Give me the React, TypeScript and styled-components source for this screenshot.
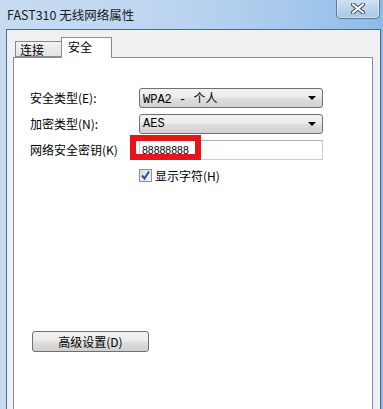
import React from "react";
import styled, { createGlobalStyle } from "styled-components";

const GlobalStyle = createGlobalStyle`
    html, body {
        margin: 0;
        padding: 0;
        background: #ffffff;
    }
    body {
        font-family: "Noto Sans CJK SC", "Liberation Sans", sans-serif;
        font-size: 12px;
    }
`;

const App = () => {
    return (
        <>
            <GlobalStyle />
            <Window>
                <TitleBar>
                    <Title>FAST310 无线网络属性</Title>
                    <CloseButton>
                        <svg width="14" height="11" viewBox="0 0 14 11">
                            <path d="M2 1.5 L12 9.5 M12 1.5 L2 9.5" stroke="#3a4a5e" strokeWidth="4" strokeLinecap="square" />
                            <path d="M2 1.5 L12 9.5 M12 1.5 L2 9.5" stroke="#ffffff" strokeWidth="2" strokeLinecap="square" />
                        </svg>
                    </CloseButton>
                </TitleBar>
                <Client>
                    <TabStrip>
                        <Tab>连接</Tab>
                        <Tab $active>安全</Tab>
                    </TabStrip>
                    <Panel>
                        <Form>
                            <FieldLabel>安全类型(E):</FieldLabel>
                            <Select>
                                <SelectText>WPA2 - 个人</SelectText>
                                <Arrow />
                            </Select>

                            <FieldLabel>加密类型(N):</FieldLabel>
                            <Select>
                                <SelectText>AES</SelectText>
                                <Arrow />
                            </Select>

                            <FieldLabel>网络安全密钥(K)</FieldLabel>
                            <KeyField>
                                <KeyText>88888888</KeyText>
                                <Highlight />
                            </KeyField>

                            <span />
                            <CheckRow>
                                <CheckBox>
                                    <svg width="11" height="11" viewBox="0 0 11 11">
                                        <path d="M2 5.5 L4.5 8.5 L9 1.5" fill="none" stroke="#2a4d9a" strokeWidth="2" />
                                    </svg>
                                </CheckBox>
                                <span>显示字符(H)</span>
                            </CheckRow>
                        </Form>
                        <AdvancedButton>高级设置(D)</AdvancedButton>
                    </Panel>
                </Client>
            </Window>
        </>
    );
};

const Window = styled.div`
    width: 383px;
    height: 409px;
    box-sizing: border-box;
    overflow: hidden;
    display: flex;
    flex-direction: column;
    padding: 0 2px 0 6px;
    background: linear-gradient(to right, #c7dcf1 0%, #bcd5ef 45%, #a7c9ec 75%, #8dbbe8 100%);
`;

const TitleBar = styled.div`
    height: 29px;
    flex-shrink: 0;
    display: flex;
    align-items: flex-start;
    justify-content: space-between;
    margin-left: -6px;
    margin-right: -2px;
    padding-left: 7px;
    padding-right: 3px;
`;

const Title = styled.div`
    margin-top: 6px;
    font-size: 12.5px;
    line-height: 18px;
    color: #1b1b1b;
    font-family: "Noto Sans CJK SC", "Liberation Sans", sans-serif;
`;

const CloseButton = styled.div`
    width: 44px;
    height: 20px;
    margin-top: -1px;
    box-sizing: border-box;
    border: 1px solid #5a7596;
    border-top: none;
    border-radius: 0 0 5px 5px;
    background: linear-gradient(to bottom, #d3e3f3 0%, #bcd3ec 50%, #a8c6e8 100%);
    box-shadow: inset 0 0 0 1px rgba(255, 255, 255, 0.5);
    display: flex;
    align-items: center;
    justify-content: center;
`;

const Client = styled.div`
    flex: 1;
    display: flex;
    flex-direction: column;
    background: #f0f0f0;
    border: 1px solid #4b6a90;
    border-bottom: none;
    padding: 7px 7px 0 6px;
    min-height: 0;
`;

const TabStrip = styled.div`
    display: flex;
    align-items: flex-end;
    padding-left: 2px;
    height: 20px;
    position: relative;
    z-index: 1;
`;

const Tab = styled.div<{ $active?: boolean }>`
    box-sizing: border-box;
    width: ${(p) => (p.$active ? "51px" : "46px")};
    height: ${(p) => (p.$active ? "21px" : "16px")};
    margin-bottom: ${(p) => (p.$active ? "-1px" : "0")};
    border: 1px solid #898c95;
    border-bottom: ${(p) => (p.$active ? "none" : "1px solid #898c95")};
    border-right: ${(p) => (p.$active ? "1px solid #898c95" : "none")};
    background: ${(p) => (p.$active ? "#ffffff" : "linear-gradient(to bottom, #f2f2f2, #e3e3e3)")};
    padding-left: ${(p) => (p.$active ? "6px" : "4px")};
    padding-top: ${(p) => (p.$active ? "1px" : "0")};
    font-size: 12px;
    line-height: 15px;
    color: #000000;
`;

const Panel = styled.div`
    flex: 1;
    display: flex;
    flex-direction: column;
    background: #ffffff;
    border: 1px solid #898c95;
    border-bottom: none;
    padding: 30px 0 0 16px;
`;

const Form = styled.div`
    display: grid;
    grid-template-columns: 109px 184px;
    grid-auto-rows: 20px;
    row-gap: 6px;
    align-items: center;
`;

const FieldLabel = styled.div`
    font-size: 12px;
    line-height: 20px;
    color: #000000;
`;

const Select = styled.div`
    height: 20px;
    box-sizing: border-box;
    display: flex;
    align-items: center;
    justify-content: space-between;
    border: 1px solid #707070;
    border-radius: 3px;
    background: linear-gradient(to bottom, #f2f2f2 0%, #ebebeb 45%, #dddddd 55%, #d2d2d2 100%);
    padding: 0 6px 0 3px;
`;

const SelectText = styled.span`
    font-size: 12px;
    color: #000000;
    white-space: pre;
    font-family: "Liberation Mono", "Noto Sans CJK SC", monospace;
`;

const Arrow = styled.span`
    width: 0;
    height: 0;
    border-left: 4px solid transparent;
    border-right: 4px solid transparent;
    border-top: 4px solid #000000;
`;

const KeyField = styled.div`
    position: relative;
    height: 20px;
    box-sizing: border-box;
    border: 1px solid #c8ccd3;
    border-top-color: #abadb3;
    background: #ffffff;
    display: flex;
    align-items: center;
    padding-left: 2px;
`;

const KeyText = styled.span`
    font-family: "Liberation Sans", sans-serif;
    font-size: 10.5px;
    color: #000000;
`;

const Highlight = styled.div`
    position: absolute;
    left: -10px;
    top: -6px;
    width: 71px;
    height: 25px;
    box-sizing: border-box;
    border: 6px solid #e8141c;
    pointer-events: none;
`;

const CheckRow = styled.div`
    align-self: start;
    display: flex;
    align-items: center;
    gap: 3px;
    margin-top: 2px;
    font-size: 12px;
    line-height: 15px;
    color: #000000;
`;

const CheckBox = styled.div`
    width: 13px;
    height: 13px;
    box-sizing: border-box;
    border: 1px solid #8e8f8f;
    background: linear-gradient(135deg, #dcdcdc, #f6f6f6);
    display: flex;
    align-items: center;
    justify-content: center;
`;

const AdvancedButton = styled.div`
    width: 117px;
    height: 21px;
    box-sizing: border-box;
    margin: 145px 0 0 2px;
    border: 1px solid #707070;
    border-radius: 3px;
    background: linear-gradient(to bottom, #f2f2f2 0%, #ebebeb 45%, #dddddd 55%, #cfcfcf 100%);
    display: flex;
    align-items: center;
    justify-content: center;
    font-size: 12px;
    color: #000000;
`;

export default App;
